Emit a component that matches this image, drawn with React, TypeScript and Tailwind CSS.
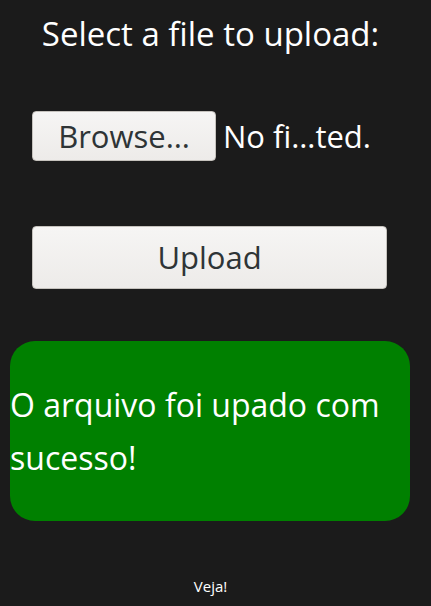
export default function App() {
  return (
    <div className="min-h-[606px] w-full bg-[#1b1b1b] font-['Open_Sans',sans-serif] text-white">
      <div className="flex flex-col items-center pt-[13px] pr-[10px]">
        <h1 className="text-[33px] leading-[42px] font-normal">Select a file to upload:</h1>
      </div>

      <div className="mt-[56px] flex items-center pl-[32px]">
        <button className="flex h-[50px] w-[184px] items-center justify-center rounded-[4px] border border-[#c5c2bd] bg-gradient-to-b from-[#f6f5f4] to-[#edebe9] text-[31px] text-[#2e3436]">
          Browse…
        </button>
        <span className="ml-[7px] text-[31px]">No fi…ted.</span>
      </div>

      <div className="mt-[65px] px-[32px]">
        <button className="flex h-[63px] w-[355px] items-center justify-center rounded-[4px] border border-[#c5c2bd] bg-gradient-to-b from-[#f6f5f4] to-[#edebe9] text-[31px] text-[#2e3436]">
          Upload
        </button>
      </div>

      <div className="mx-[10px] mt-[52px] flex h-[180px] w-[400px] items-center rounded-[25px] bg-[#008000]">
        <p className="text-[32px] leading-[53px]">O arquivo foi upado com sucesso!</p>
      </div>

      <div className="mt-[55px] text-center text-[15px] leading-[20px]">
        <span className="inline-block pr-[10px]">Veja!</span>
      </div>
    </div>
  );
}
